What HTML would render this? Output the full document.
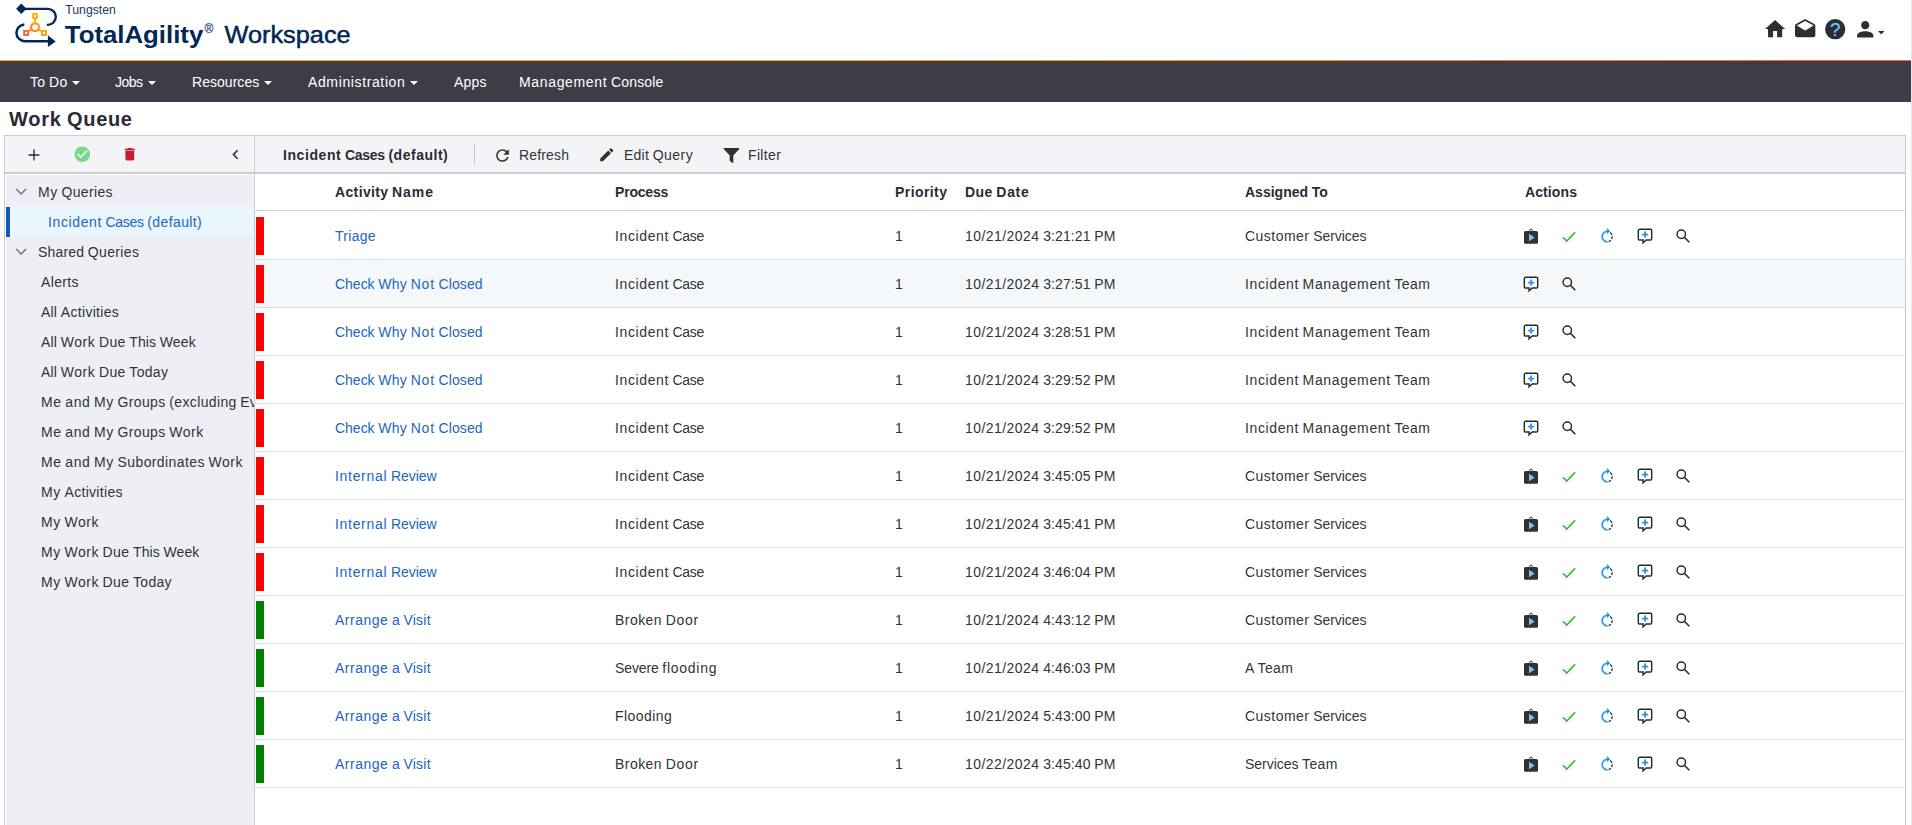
<!DOCTYPE html>
<html lang="en"><head><meta charset="utf-8"><title>Work Queue</title>
<style>
html,body{margin:0;padding:0;background:#fff;}
body{width:1912px;height:825px;overflow:hidden;position:relative;font-family:"Liberation Sans",sans-serif;font-size:14px;color:#333;}
.a{position:absolute;white-space:nowrap;}
.a svg{display:block;}
.t{position:absolute;white-space:nowrap;height:30px;line-height:30px;}
.nav{color:#fff;}
.lnk{color:#2465bd;}
.b{font-weight:700;color:#2b2b33;}
.hl{position:absolute;background:#ddd;height:1px;}
</style></head><body>

<div class="a" style="left:1911px;top:0;width:1px;height:825px;background:#e9e9e9"></div>
<svg class="a" style="left:0;top:0" width="360" height="60" viewBox="0 0 360 60">
<defs><linearGradient id="lg" gradientUnits="userSpaceOnUse" x1="23" y1="36" x2="47" y2="13"><stop offset="0" stop-color="#ff4c40"/><stop offset="0.14" stop-color="#ff6240"/><stop offset="0.45" stop-color="#ff9818"/><stop offset="0.7" stop-color="#ffb300"/><stop offset="1" stop-color="#ffc400"/></linearGradient></defs>
<path d="M21.3 3.6l5.2 5.2-5.2 5.2-5.2-5.2z" fill="#002854"/>
<path d="M24 8.85H47.8a8 8 0 0 1 0 16H46.9" fill="none" stroke="#002854" stroke-width="2.4"/>
<path d="M24.3 24.42a8.4 8.4 0 0 0 0.3 16.78H49" fill="none" stroke="#002854" stroke-width="2.5"/>
<path d="M47.9 35.2l7.8 6.2-7.8 5.6z" fill="#002854"/>
<path d="M35.05 19v4.5M31.7 29.2l-3 2M38.3 29.2l3 2" stroke="url(#lg)" stroke-width="1.7" fill="none"/>
<circle cx="35" cy="27.2" r="3.97" fill="none" stroke="url(#lg)" stroke-width="2.3"/>
<rect x="33.15" y="13.9" width="3.9" height="4.2" fill="none" stroke="url(#lg)" stroke-width="1.9"/>
<rect x="24.2" y="31" width="4" height="3.95" fill="none" stroke="url(#lg)" stroke-width="1.95"/>
<rect x="42.05" y="31" width="4" height="3.95" fill="none" stroke="url(#lg)" stroke-width="1.95"/>
<text x="65.3" y="14.4" font-family="Liberation Sans, sans-serif" font-size="12" fill="#17355f" textLength="50.5" lengthAdjust="spacingAndGlyphs">Tungsten</text>
<text x="64.8" y="42.5" font-family="Liberation Sans, sans-serif" font-size="24.6" font-weight="700" fill="#002854" textLength="138.5" lengthAdjust="spacingAndGlyphs">TotalAgility</text>
<text x="204.4" y="33" font-family="Liberation Sans, sans-serif" font-size="12" fill="#3a5078" stroke="#3a5078" stroke-width="0.25">®</text>
<text x="224.6" y="42.5" font-family="Liberation Sans, sans-serif" font-size="24.6" fill="#002854" stroke="#002854" stroke-width="0.5" textLength="126" lengthAdjust="spacingAndGlyphs">Workspace</text>
</svg>
<div class="a" style="left:1763.2px;top:16.6px;"><svg width="24.2" height="24.2" viewBox="0 0 24 24" ><path fill="#2d2d38" d="M10 20v-6h4v6h5v-8h3L12 3 2 12h3v8z"/></svg></div>
<div class="a" style="left:1792.7px;top:17.7px;"><svg width="24.4" height="23.1" viewBox="0 0 24 24" preserveAspectRatio="none"><path fill="#2d2d38" d="M21.99 8c0-.72-.37-1.35-.94-1.7L12 1 2.95 6.3C2.38 6.65 2 7.28 2 8v10c0 1.1.9 2 2 2h16c1.1 0 2-.9 2-2l-.01-10zM12 13L3.74 7.84 12 3l8.26 4.84L12 13z"/></svg></div>
<div class="a" style="left:1822.7px;top:16.6px;"><svg width="24.4" height="24.4" viewBox="0 0 24 24"><circle cx="12" cy="12" r="10" fill="#2d2d38"/><text x="12" y="18.6" text-anchor="middle" font-family="Liberation Sans, sans-serif" font-size="18.5" fill="#6fcaf9" stroke="#6fcaf9" stroke-width="0.2">?</text></svg></div>
<div class="a" style="left:1853.2px;top:16.9px;"><svg width="24.5" height="24.5" viewBox="0 0 24 24" ><path fill="#2d2d38" d="M12 12c2.21 0 4-1.79 4-4s-1.79-4-4-4-4 1.79-4 4 1.79 4 4 4zm0 2c-2.67 0-8 1.34-8 4v2h16v-2c0-2.66-5.33-4-8-4z"/></svg></div>
<div class="a" style="left:1877.8px;top:30.5px;"><svg width="6.4" height="3.6" viewBox="0 0 7 4"><path d="M0 0h7L3.5 4z" fill="#2d2d38"/></svg></div>
<div class="a" style="left:0;top:60px;width:1911px;height:1px;background:linear-gradient(90deg,#f5b700 0%,#f7a823 45%,#f4683a 100%)"></div>
<div class="a" style="left:0;top:61px;width:1911px;height:40.5px;background:#3d3d47"></div>
<div class="t nav" style="left:30px;top:67px"><span style="word-spacing:-0.250px"><span style="letter-spacing:0.242px">To</span> <span style="letter-spacing:0.398px">Do</span></span></div>
<div class="a" style="left:71.6px;top:80.6px;"><svg width="8" height="4" viewBox="0 0 8 4"><path d="M0 0h8L4 4z" fill="#fff"/></svg></div>
<div class="t nav" style="left:115px;top:67px"><span style="word-spacing:-0.250px"><span style="letter-spacing:-0.492px">Jobs</span></span></div>
<div class="a" style="left:147.6px;top:80.6px;"><svg width="8" height="4" viewBox="0 0 8 4"><path d="M0 0h8L4 4z" fill="#fff"/></svg></div>
<div class="t nav" style="left:192px;top:67px"><span style="word-spacing:-0.250px"><span style="letter-spacing:0.038px">Resources</span></span></div>
<div class="a" style="left:263.6px;top:80.6px;"><svg width="8" height="4" viewBox="0 0 8 4"><path d="M0 0h8L4 4z" fill="#fff"/></svg></div>
<div class="t nav" style="left:308px;top:67px"><span style="word-spacing:-0.250px"><span style="letter-spacing:0.624px">Administration</span></span></div>
<div class="a" style="left:409.6px;top:80.6px;"><svg width="8" height="4" viewBox="0 0 8 4"><path d="M0 0h8L4 4z" fill="#fff"/></svg></div>
<div class="t nav" style="left:454px;top:67px"><span style="word-spacing:-0.250px"><span style="letter-spacing:0.238px">Apps</span></span></div>
<div class="t nav" style="left:519px;top:67px"><span style="word-spacing:-0.250px"><span style="letter-spacing:0.655px">Management</span> <span style="letter-spacing:0.183px">Console</span></span></div>
<div class="t" style="left:9px;top:104px;font-size:20px;font-weight:700;color:#2a2a34"><span style="word-spacing:-0.359px"><span style="letter-spacing:0.785px">Work</span> <span style="letter-spacing:0.691px">Queue</span></span></div>
<div class="a" style="left:4px;top:135px;width:1902px;height:700px;box-sizing:border-box;border:1px solid #cdcdcd;background:#fff"></div>
<div class="a" style="left:5px;top:136px;width:1900px;height:36px;background:#f4f4f8"></div>
<div class="a" style="left:5px;top:172px;width:1900px;height:2px;background:#cdcdcd"></div>
<div class="a" style="left:6px;top:175px;width:248px;height:660px;background:#eeeff5"></div>
<div class="a" style="left:254px;top:136px;width:1px;height:700px;background:#cdcdcd"></div>
<div class="a" style="left:474px;top:144px;width:1px;height:20px;background:#c4c4c8"></div>
<div class="a" style="left:28px;top:148.6px;"><svg width="12" height="12" viewBox="0 0 12 12"><path d="M0.6 6h10.8M6 0.6v10.8" stroke="#2d2d38" stroke-width="1.35" fill="none"/></svg></div>
<div class="a" style="left:72.6px;top:145.2px;"><svg width="18.6" height="18.6" viewBox="0 0 24 24" ><path fill="#78d88c" d="M12 2C6.48 2 2 6.48 2 12s4.48 10 10 10 10-4.48 10-10S17.52 2 12 2zm-2 15l-5-5 1.41-1.41L10 14.17l7.59-7.59L19 8l-9 9z"/></svg></div>
<div class="a" style="left:121px;top:145.6px;"><svg width="17.6" height="16.5" viewBox="0 0 24 24" preserveAspectRatio="none"><path fill="#c41e30" d="M6 19c0 1.1.9 2 2 2h8c1.1 0 2-.9 2-2V7H6v12zM19 4h-3.5l-1-1h-5l-1 1H5v2h14V4z"/></svg></div>
<div class="a" style="left:225.5px;top:145px;"><svg width="19" height="19" viewBox="0 0 24 24" ><path fill="#2d2d38" d="M15.41 7.41L14 6l-6 6 6 6 1.41-1.41L10.83 12z"/></svg></div>
<div class="t b" style="left:283px;top:140px"><span style="word-spacing:-0.250px"><span style="letter-spacing:0.584px">Incident</span> <span style="letter-spacing:-0.294px">Cases</span> <span style="letter-spacing:0.516px">(default)</span></span></div>
<div class="a" style="left:492.6px;top:145.6px;"><svg width="19" height="19" viewBox="0 0 24 24" ><path fill="#33322a" d="M17.65 6.35C16.2 4.9 14.21 4 12 4c-4.42 0-7.99 3.58-7.99 8s3.57 8 7.99 8c3.73 0 6.84-2.55 7.73-6h-2.08c-.82 2.33-3.04 4-5.65 4-3.31 0-6-2.69-6-6s2.69-6 6-6c1.66 0 3.14.69 4.22 1.78L13 11h7V4l-2.35 2.35z"/></svg></div>
<div class="t" style="left:519px;top:140px"><span style="word-spacing:-0.250px"><span style="letter-spacing:0.165px">Refresh</span></span></div>
<div class="a" style="left:597.6px;top:146px;"><svg width="17.5" height="17.5" viewBox="0 0 24 24" ><path fill="#33322a" d="M3 17.25V21h3.75L17.81 9.94l-3.75-3.75L3 17.25zM20.71 7.04c.39-.39.39-1.02 0-1.41l-2.34-2.34c-.39-.39-1.02-.39-1.41 0l-1.83 1.83 3.75 3.75 1.83-1.83z"/></svg></div>
<div class="t" style="left:624px;top:140px"><span style="word-spacing:-0.250px"><span style="letter-spacing:0.234px">Edit</span> <span style="letter-spacing:0.456px">Query</span></span></div>
<div class="a" style="left:722.5px;top:147px;"><svg width="17" height="17" viewBox="0 0 17 17"><path d="M1.2 1h14.6a.6.6 0 0 1 .45 1L10.3 8.6v6.9a.5.5 0 0 1-.8.4L6.9 14a.6.6 0 0 1-.2-.45V8.6L.75 2a.6.6 0 0 1 .45-1z" fill="#33322a"/></svg></div>
<div class="t" style="left:748px;top:140px"><span style="word-spacing:-0.250px"><span style="letter-spacing:0.352px">Filter</span></span></div>
<div class="a" style="left:6px;top:207px;width:248px;height:30px;background:#e9f6fe"></div>
<div class="a" style="left:6px;top:207px;width:4px;height:30px;background:#0e5bbe"></div>
<div class="a" style="left:15px;top:188.4px;"><svg width="12" height="8" viewBox="0 0 12 8"><path d="M1.2 1l4.9 5 4.9-5" fill="none" stroke="#70707a" stroke-width="1.4"/></svg></div>
<div class="a" style="left:15px;top:248.4px;"><svg width="12" height="8" viewBox="0 0 12 8"><path d="M1.2 1l4.9 5 4.9-5" fill="none" stroke="#70707a" stroke-width="1.4"/></svg></div>
<div class="t" style="left:38px;top:177px;max-width:216px;overflow:hidden"><span style="word-spacing:-0.250px"><span style="letter-spacing:0.586px">My</span> <span style="letter-spacing:0.350px">Queries</span></span></div>
<div class="t lnk" style="left:48px;top:207px;max-width:206px;overflow:hidden"><span style="word-spacing:-0.250px"><span style="letter-spacing:0.613px">Incident</span> <span style="letter-spacing:-0.334px">Cases</span> <span style="letter-spacing:0.394px">(default)</span></span></div>
<div class="t" style="left:38px;top:237px;max-width:216px;overflow:hidden"><span style="word-spacing:-0.250px"><span style="letter-spacing:0.174px">Shared</span> <span style="letter-spacing:0.350px">Queries</span></span></div>
<div class="t" style="left:41px;top:267px;max-width:213px;overflow:hidden"><span style="word-spacing:-0.250px"><span style="letter-spacing:0.367px">Alerts</span></span></div>
<div class="t" style="left:41px;top:297px;max-width:213px;overflow:hidden"><span style="word-spacing:-0.250px"><span style="letter-spacing:0.203px">All</span> <span style="letter-spacing:0.309px">Activities</span></span></div>
<div class="t" style="left:41px;top:327px;max-width:213px;overflow:hidden"><span style="word-spacing:-0.250px"><span style="letter-spacing:0.203px">All</span> <span style="letter-spacing:0.512px">Work</span> <span style="letter-spacing:0.365px">Due</span> <span style="letter-spacing:0.078px">This</span> <span style="letter-spacing:0.117px">Week</span></span></div>
<div class="t" style="left:41px;top:357px;max-width:213px;overflow:hidden"><span style="word-spacing:-0.250px"><span style="letter-spacing:0.203px">All</span> <span style="letter-spacing:0.512px">Work</span> <span style="letter-spacing:0.365px">Due</span> <span style="letter-spacing:0.306px">Today</span></span></div>
<div class="t" style="left:41px;top:387px;max-width:213px;overflow:hidden"><span style="word-spacing:-0.250px"><span style="letter-spacing:0.578px">Me</span> <span style="letter-spacing:0.589px">and</span> <span style="letter-spacing:0.586px">My</span> <span style="letter-spacing:0.370px">Groups</span> <span style="letter-spacing:0.359px">(excluding</span> <span style="letter-spacing:-0.009px">Events)</span></span></div>
<div class="t" style="left:41px;top:417px;max-width:213px;overflow:hidden"><span style="word-spacing:-0.250px"><span style="letter-spacing:0.578px">Me</span> <span style="letter-spacing:0.589px">and</span> <span style="letter-spacing:0.586px">My</span> <span style="letter-spacing:0.370px">Groups</span> <span style="letter-spacing:0.512px">Work</span></span></div>
<div class="t" style="left:41px;top:447px;max-width:213px;overflow:hidden"><span style="word-spacing:-0.250px"><span style="letter-spacing:0.578px">Me</span> <span style="letter-spacing:0.589px">and</span> <span style="letter-spacing:0.586px">My</span> <span style="letter-spacing:0.400px">Subordinates</span> <span style="letter-spacing:0.512px">Work</span></span></div>
<div class="t" style="left:41px;top:477px;max-width:213px;overflow:hidden"><span style="word-spacing:-0.250px"><span style="letter-spacing:0.586px">My</span> <span style="letter-spacing:0.309px">Activities</span></span></div>
<div class="t" style="left:41px;top:507px;max-width:213px;overflow:hidden"><span style="word-spacing:-0.250px"><span style="letter-spacing:0.586px">My</span> <span style="letter-spacing:0.512px">Work</span></span></div>
<div class="t" style="left:41px;top:537px;max-width:213px;overflow:hidden"><span style="word-spacing:-0.250px"><span style="letter-spacing:0.586px">My</span> <span style="letter-spacing:0.512px">Work</span> <span style="letter-spacing:0.365px">Due</span> <span style="letter-spacing:0.078px">This</span> <span style="letter-spacing:0.117px">Week</span></span></div>
<div class="t" style="left:41px;top:567px;max-width:213px;overflow:hidden"><span style="word-spacing:-0.250px"><span style="letter-spacing:0.586px">My</span> <span style="letter-spacing:0.512px">Work</span> <span style="letter-spacing:0.365px">Due</span> <span style="letter-spacing:0.306px">Today</span></span></div>
<div class="t b" style="left:335px;top:177px"><span style="word-spacing:-0.250px"><span style="letter-spacing:0.357px">Activity</span> <span style="letter-spacing:0.910px">Name</span></span></div>
<div class="t b" style="left:615px;top:177px"><span style="word-spacing:-0.250px"><span style="letter-spacing:-0.203px">Process</span></span></div>
<div class="t b" style="left:895px;top:177px"><span style="word-spacing:-0.250px"><span style="letter-spacing:0.424px">Priority</span></span></div>
<div class="t b" style="left:965px;top:177px"><span style="word-spacing:-0.250px"><span style="letter-spacing:0.422px">Due</span> <span style="letter-spacing:0.680px">Date</span></span></div>
<div class="t b" style="left:1245px;top:177px"><span style="word-spacing:-0.250px"><span style="letter-spacing:0.010px">Assigned</span> <span style="letter-spacing:-0.109px">To</span></span></div>
<div class="t b" style="left:1525px;top:177px"><span style="word-spacing:-0.250px"><span style="letter-spacing:0.103px">Actions</span></span></div>
<div class="hl" style="left:255px;top:210px;width:1650px;background:#d0d0d0"></div>
<div class="a" style="left:256px;top:217px;width:8px;height:38px;background:#fe0000"></div>
<div class="t lnk" style="left:335px;top:221px"><span style="word-spacing:-0.250px"><span style="letter-spacing:0.279px">Triage</span></span></div>
<div class="t" style="left:615px;top:221px"><span style="word-spacing:-0.250px"><span style="letter-spacing:0.613px">Incident</span> <span style="letter-spacing:-0.344px">Case</span></span></div>
<div class="t" style="left:895px;top:221px"><span style="word-spacing:-0.250px"><span style="letter-spacing:0.219px">1</span></span></div>
<div class="t" style="left:965px;top:221px"><span style="word-spacing:-0.250px"><span style="letter-spacing:0.441px">10/21/2024</span> <span style="letter-spacing:0.118px">3:21:21</span> <span style="letter-spacing:0.086px">PM</span></span></div>
<div class="t" style="left:1245px;top:221px"><span style="word-spacing:-0.250px"><span style="letter-spacing:0.477px">Customer</span> <span style="letter-spacing:-0.033px">Services</span></span></div>
<div class="a" style="left:1522px;top:226px;"><svg width="18" height="20" viewBox="0 0 18 20"><circle cx="9" cy="4.7" r="1.5" fill="none" stroke="#33322a" stroke-width="1"/><rect x="2" y="4.9" width="14" height="12.9" rx="1.6" fill="#33322a"/><path d="M7 7.8v7.4l5.8-3.7z" fill="#6ec3fb"/></svg></div>
<div class="a" style="left:1560px;top:226.8px;"><svg width="18" height="18" viewBox="0 0 18 18"><path d="M2.9 10.3l3.8 3.8L15.2 5.3" fill="none" stroke="#20bb38" stroke-width="1.5"/></svg></div>
<div class="a" style="left:1598px;top:226px;"><svg width="18" height="20" viewBox="0 0 18 20"><path d="M9.6 15.9A5.3 5.3 0 1 1 9.3 5.3" fill="none" stroke="#2196f3" stroke-width="1.6"/><path d="M8.9 1.9v6.4l3.4-3.2z" fill="#2196f3"/><path d="M12.2 6.6A5.3 5.3 0 0 1 10.6 15.7" fill="none" stroke="#2b2320" stroke-width="1.3" stroke-dasharray="2.7 1.5"/></svg></div>
<div class="a" style="left:1636px;top:227.4px;"><svg width="18" height="18" viewBox="0 0 18 18"><path d="M3.6 2.3h10.8a1.3 1.3 0 0 1 1.3 1.3v8.1a1.3 1.3 0 0 1 -1.3 1.3H10.2L7.1 15.9V13H3.6a1.3 1.3 0 0 1 -1.3 -1.3V3.6a1.3 1.3 0 0 1 1.3 -1.3z" fill="none" stroke="#2b2924" stroke-width="1.45" stroke-linejoin="miter"/><path d="M6.1 7.6h6M9.1 4.6v6" stroke="#2196f3" stroke-width="1.8" fill="none"/></svg></div>
<div class="a" style="left:1673.8px;top:227.4px;"><svg width="18" height="18" viewBox="0 0 18 18"><circle cx="7.3" cy="7.2" r="4.2" fill="none" stroke="#2b2924" stroke-width="1.45"/><path d="M10.4 10.3l4.9 4.9" stroke="#2b2924" stroke-width="1.6" fill="none"/></svg></div>
<div class="hl" style="left:255px;top:259px;width:1650px"></div>
<div class="a" style="left:255px;top:260px;width:1650px;height:47px;background:#f5f8fb"></div>
<div class="a" style="left:256px;top:265px;width:8px;height:38px;background:#fe0000"></div>
<div class="t lnk" style="left:335px;top:269px"><span style="word-spacing:-0.250px"><span style="letter-spacing:-0.019px">Check</span> <span style="letter-spacing:0.271px">Why</span> <span style="letter-spacing:0.792px">Not</span> <span style="letter-spacing:0.094px">Closed</span></span></div>
<div class="t" style="left:615px;top:269px"><span style="word-spacing:-0.250px"><span style="letter-spacing:0.613px">Incident</span> <span style="letter-spacing:-0.344px">Case</span></span></div>
<div class="t" style="left:895px;top:269px"><span style="word-spacing:-0.250px"><span style="letter-spacing:0.219px">1</span></span></div>
<div class="t" style="left:965px;top:269px"><span style="word-spacing:-0.250px"><span style="letter-spacing:0.441px">10/21/2024</span> <span style="letter-spacing:0.118px">3:27:51</span> <span style="letter-spacing:0.086px">PM</span></span></div>
<div class="t" style="left:1245px;top:269px"><span style="word-spacing:-0.250px"><span style="letter-spacing:0.613px">Incident</span> <span style="letter-spacing:0.655px">Management</span> <span style="letter-spacing:0.355px">Team</span></span></div>
<div class="a" style="left:1522px;top:275.4px;"><svg width="18" height="18" viewBox="0 0 18 18"><path d="M3.6 2.3h10.8a1.3 1.3 0 0 1 1.3 1.3v8.1a1.3 1.3 0 0 1 -1.3 1.3H10.2L7.1 15.9V13H3.6a1.3 1.3 0 0 1 -1.3 -1.3V3.6a1.3 1.3 0 0 1 1.3 -1.3z" fill="none" stroke="#2b2924" stroke-width="1.45" stroke-linejoin="miter"/><path d="M6.1 7.6h6M9.1 4.6v6" stroke="#2196f3" stroke-width="1.8" fill="none"/></svg></div>
<div class="a" style="left:1559.8px;top:275.4px;"><svg width="18" height="18" viewBox="0 0 18 18"><circle cx="7.3" cy="7.2" r="4.2" fill="none" stroke="#2b2924" stroke-width="1.45"/><path d="M10.4 10.3l4.9 4.9" stroke="#2b2924" stroke-width="1.6" fill="none"/></svg></div>
<div class="hl" style="left:255px;top:307px;width:1650px"></div>
<div class="a" style="left:256px;top:313px;width:8px;height:38px;background:#fe0000"></div>
<div class="t lnk" style="left:335px;top:317px"><span style="word-spacing:-0.250px"><span style="letter-spacing:-0.019px">Check</span> <span style="letter-spacing:0.271px">Why</span> <span style="letter-spacing:0.792px">Not</span> <span style="letter-spacing:0.094px">Closed</span></span></div>
<div class="t" style="left:615px;top:317px"><span style="word-spacing:-0.250px"><span style="letter-spacing:0.613px">Incident</span> <span style="letter-spacing:-0.344px">Case</span></span></div>
<div class="t" style="left:895px;top:317px"><span style="word-spacing:-0.250px"><span style="letter-spacing:0.219px">1</span></span></div>
<div class="t" style="left:965px;top:317px"><span style="word-spacing:-0.250px"><span style="letter-spacing:0.441px">10/21/2024</span> <span style="letter-spacing:0.118px">3:28:51</span> <span style="letter-spacing:0.086px">PM</span></span></div>
<div class="t" style="left:1245px;top:317px"><span style="word-spacing:-0.250px"><span style="letter-spacing:0.613px">Incident</span> <span style="letter-spacing:0.655px">Management</span> <span style="letter-spacing:0.355px">Team</span></span></div>
<div class="a" style="left:1522px;top:323.4px;"><svg width="18" height="18" viewBox="0 0 18 18"><path d="M3.6 2.3h10.8a1.3 1.3 0 0 1 1.3 1.3v8.1a1.3 1.3 0 0 1 -1.3 1.3H10.2L7.1 15.9V13H3.6a1.3 1.3 0 0 1 -1.3 -1.3V3.6a1.3 1.3 0 0 1 1.3 -1.3z" fill="none" stroke="#2b2924" stroke-width="1.45" stroke-linejoin="miter"/><path d="M6.1 7.6h6M9.1 4.6v6" stroke="#2196f3" stroke-width="1.8" fill="none"/></svg></div>
<div class="a" style="left:1559.8px;top:323.4px;"><svg width="18" height="18" viewBox="0 0 18 18"><circle cx="7.3" cy="7.2" r="4.2" fill="none" stroke="#2b2924" stroke-width="1.45"/><path d="M10.4 10.3l4.9 4.9" stroke="#2b2924" stroke-width="1.6" fill="none"/></svg></div>
<div class="hl" style="left:255px;top:355px;width:1650px"></div>
<div class="a" style="left:256px;top:361px;width:8px;height:38px;background:#fe0000"></div>
<div class="t lnk" style="left:335px;top:365px"><span style="word-spacing:-0.250px"><span style="letter-spacing:-0.019px">Check</span> <span style="letter-spacing:0.271px">Why</span> <span style="letter-spacing:0.792px">Not</span> <span style="letter-spacing:0.094px">Closed</span></span></div>
<div class="t" style="left:615px;top:365px"><span style="word-spacing:-0.250px"><span style="letter-spacing:0.613px">Incident</span> <span style="letter-spacing:-0.344px">Case</span></span></div>
<div class="t" style="left:895px;top:365px"><span style="word-spacing:-0.250px"><span style="letter-spacing:0.219px">1</span></span></div>
<div class="t" style="left:965px;top:365px"><span style="word-spacing:-0.250px"><span style="letter-spacing:0.441px">10/21/2024</span> <span style="letter-spacing:0.118px">3:29:52</span> <span style="letter-spacing:0.086px">PM</span></span></div>
<div class="t" style="left:1245px;top:365px"><span style="word-spacing:-0.250px"><span style="letter-spacing:0.613px">Incident</span> <span style="letter-spacing:0.655px">Management</span> <span style="letter-spacing:0.355px">Team</span></span></div>
<div class="a" style="left:1522px;top:371.4px;"><svg width="18" height="18" viewBox="0 0 18 18"><path d="M3.6 2.3h10.8a1.3 1.3 0 0 1 1.3 1.3v8.1a1.3 1.3 0 0 1 -1.3 1.3H10.2L7.1 15.9V13H3.6a1.3 1.3 0 0 1 -1.3 -1.3V3.6a1.3 1.3 0 0 1 1.3 -1.3z" fill="none" stroke="#2b2924" stroke-width="1.45" stroke-linejoin="miter"/><path d="M6.1 7.6h6M9.1 4.6v6" stroke="#2196f3" stroke-width="1.8" fill="none"/></svg></div>
<div class="a" style="left:1559.8px;top:371.4px;"><svg width="18" height="18" viewBox="0 0 18 18"><circle cx="7.3" cy="7.2" r="4.2" fill="none" stroke="#2b2924" stroke-width="1.45"/><path d="M10.4 10.3l4.9 4.9" stroke="#2b2924" stroke-width="1.6" fill="none"/></svg></div>
<div class="hl" style="left:255px;top:403px;width:1650px"></div>
<div class="a" style="left:256px;top:409px;width:8px;height:38px;background:#fe0000"></div>
<div class="t lnk" style="left:335px;top:413px"><span style="word-spacing:-0.250px"><span style="letter-spacing:-0.019px">Check</span> <span style="letter-spacing:0.271px">Why</span> <span style="letter-spacing:0.792px">Not</span> <span style="letter-spacing:0.094px">Closed</span></span></div>
<div class="t" style="left:615px;top:413px"><span style="word-spacing:-0.250px"><span style="letter-spacing:0.613px">Incident</span> <span style="letter-spacing:-0.344px">Case</span></span></div>
<div class="t" style="left:895px;top:413px"><span style="word-spacing:-0.250px"><span style="letter-spacing:0.219px">1</span></span></div>
<div class="t" style="left:965px;top:413px"><span style="word-spacing:-0.250px"><span style="letter-spacing:0.441px">10/21/2024</span> <span style="letter-spacing:0.118px">3:29:52</span> <span style="letter-spacing:0.086px">PM</span></span></div>
<div class="t" style="left:1245px;top:413px"><span style="word-spacing:-0.250px"><span style="letter-spacing:0.613px">Incident</span> <span style="letter-spacing:0.655px">Management</span> <span style="letter-spacing:0.355px">Team</span></span></div>
<div class="a" style="left:1522px;top:419.4px;"><svg width="18" height="18" viewBox="0 0 18 18"><path d="M3.6 2.3h10.8a1.3 1.3 0 0 1 1.3 1.3v8.1a1.3 1.3 0 0 1 -1.3 1.3H10.2L7.1 15.9V13H3.6a1.3 1.3 0 0 1 -1.3 -1.3V3.6a1.3 1.3 0 0 1 1.3 -1.3z" fill="none" stroke="#2b2924" stroke-width="1.45" stroke-linejoin="miter"/><path d="M6.1 7.6h6M9.1 4.6v6" stroke="#2196f3" stroke-width="1.8" fill="none"/></svg></div>
<div class="a" style="left:1559.8px;top:419.4px;"><svg width="18" height="18" viewBox="0 0 18 18"><circle cx="7.3" cy="7.2" r="4.2" fill="none" stroke="#2b2924" stroke-width="1.45"/><path d="M10.4 10.3l4.9 4.9" stroke="#2b2924" stroke-width="1.6" fill="none"/></svg></div>
<div class="hl" style="left:255px;top:451px;width:1650px"></div>
<div class="a" style="left:256px;top:457px;width:8px;height:38px;background:#fe0000"></div>
<div class="t lnk" style="left:335px;top:461px"><span style="word-spacing:-0.250px"><span style="letter-spacing:0.693px">Internal</span> <span style="letter-spacing:-0.039px">Review</span></span></div>
<div class="t" style="left:615px;top:461px"><span style="word-spacing:-0.250px"><span style="letter-spacing:0.613px">Incident</span> <span style="letter-spacing:-0.344px">Case</span></span></div>
<div class="t" style="left:895px;top:461px"><span style="word-spacing:-0.250px"><span style="letter-spacing:0.219px">1</span></span></div>
<div class="t" style="left:965px;top:461px"><span style="word-spacing:-0.250px"><span style="letter-spacing:0.441px">10/21/2024</span> <span style="letter-spacing:0.118px">3:45:05</span> <span style="letter-spacing:0.086px">PM</span></span></div>
<div class="t" style="left:1245px;top:461px"><span style="word-spacing:-0.250px"><span style="letter-spacing:0.477px">Customer</span> <span style="letter-spacing:-0.033px">Services</span></span></div>
<div class="a" style="left:1522px;top:466px;"><svg width="18" height="20" viewBox="0 0 18 20"><circle cx="9" cy="4.7" r="1.5" fill="none" stroke="#33322a" stroke-width="1"/><rect x="2" y="4.9" width="14" height="12.9" rx="1.6" fill="#33322a"/><path d="M7 7.8v7.4l5.8-3.7z" fill="#6ec3fb"/></svg></div>
<div class="a" style="left:1560px;top:466.8px;"><svg width="18" height="18" viewBox="0 0 18 18"><path d="M2.9 10.3l3.8 3.8L15.2 5.3" fill="none" stroke="#20bb38" stroke-width="1.5"/></svg></div>
<div class="a" style="left:1598px;top:466px;"><svg width="18" height="20" viewBox="0 0 18 20"><path d="M9.6 15.9A5.3 5.3 0 1 1 9.3 5.3" fill="none" stroke="#2196f3" stroke-width="1.6"/><path d="M8.9 1.9v6.4l3.4-3.2z" fill="#2196f3"/><path d="M12.2 6.6A5.3 5.3 0 0 1 10.6 15.7" fill="none" stroke="#2b2320" stroke-width="1.3" stroke-dasharray="2.7 1.5"/></svg></div>
<div class="a" style="left:1636px;top:467.4px;"><svg width="18" height="18" viewBox="0 0 18 18"><path d="M3.6 2.3h10.8a1.3 1.3 0 0 1 1.3 1.3v8.1a1.3 1.3 0 0 1 -1.3 1.3H10.2L7.1 15.9V13H3.6a1.3 1.3 0 0 1 -1.3 -1.3V3.6a1.3 1.3 0 0 1 1.3 -1.3z" fill="none" stroke="#2b2924" stroke-width="1.45" stroke-linejoin="miter"/><path d="M6.1 7.6h6M9.1 4.6v6" stroke="#2196f3" stroke-width="1.8" fill="none"/></svg></div>
<div class="a" style="left:1673.8px;top:467.4px;"><svg width="18" height="18" viewBox="0 0 18 18"><circle cx="7.3" cy="7.2" r="4.2" fill="none" stroke="#2b2924" stroke-width="1.45"/><path d="M10.4 10.3l4.9 4.9" stroke="#2b2924" stroke-width="1.6" fill="none"/></svg></div>
<div class="hl" style="left:255px;top:499px;width:1650px"></div>
<div class="a" style="left:256px;top:505px;width:8px;height:38px;background:#fe0000"></div>
<div class="t lnk" style="left:335px;top:509px"><span style="word-spacing:-0.250px"><span style="letter-spacing:0.693px">Internal</span> <span style="letter-spacing:-0.039px">Review</span></span></div>
<div class="t" style="left:615px;top:509px"><span style="word-spacing:-0.250px"><span style="letter-spacing:0.613px">Incident</span> <span style="letter-spacing:-0.344px">Case</span></span></div>
<div class="t" style="left:895px;top:509px"><span style="word-spacing:-0.250px"><span style="letter-spacing:0.219px">1</span></span></div>
<div class="t" style="left:965px;top:509px"><span style="word-spacing:-0.250px"><span style="letter-spacing:0.441px">10/21/2024</span> <span style="letter-spacing:0.118px">3:45:41</span> <span style="letter-spacing:0.086px">PM</span></span></div>
<div class="t" style="left:1245px;top:509px"><span style="word-spacing:-0.250px"><span style="letter-spacing:0.477px">Customer</span> <span style="letter-spacing:-0.033px">Services</span></span></div>
<div class="a" style="left:1522px;top:514px;"><svg width="18" height="20" viewBox="0 0 18 20"><circle cx="9" cy="4.7" r="1.5" fill="none" stroke="#33322a" stroke-width="1"/><rect x="2" y="4.9" width="14" height="12.9" rx="1.6" fill="#33322a"/><path d="M7 7.8v7.4l5.8-3.7z" fill="#6ec3fb"/></svg></div>
<div class="a" style="left:1560px;top:514.8px;"><svg width="18" height="18" viewBox="0 0 18 18"><path d="M2.9 10.3l3.8 3.8L15.2 5.3" fill="none" stroke="#20bb38" stroke-width="1.5"/></svg></div>
<div class="a" style="left:1598px;top:514px;"><svg width="18" height="20" viewBox="0 0 18 20"><path d="M9.6 15.9A5.3 5.3 0 1 1 9.3 5.3" fill="none" stroke="#2196f3" stroke-width="1.6"/><path d="M8.9 1.9v6.4l3.4-3.2z" fill="#2196f3"/><path d="M12.2 6.6A5.3 5.3 0 0 1 10.6 15.7" fill="none" stroke="#2b2320" stroke-width="1.3" stroke-dasharray="2.7 1.5"/></svg></div>
<div class="a" style="left:1636px;top:515.4px;"><svg width="18" height="18" viewBox="0 0 18 18"><path d="M3.6 2.3h10.8a1.3 1.3 0 0 1 1.3 1.3v8.1a1.3 1.3 0 0 1 -1.3 1.3H10.2L7.1 15.9V13H3.6a1.3 1.3 0 0 1 -1.3 -1.3V3.6a1.3 1.3 0 0 1 1.3 -1.3z" fill="none" stroke="#2b2924" stroke-width="1.45" stroke-linejoin="miter"/><path d="M6.1 7.6h6M9.1 4.6v6" stroke="#2196f3" stroke-width="1.8" fill="none"/></svg></div>
<div class="a" style="left:1673.8px;top:515.4px;"><svg width="18" height="18" viewBox="0 0 18 18"><circle cx="7.3" cy="7.2" r="4.2" fill="none" stroke="#2b2924" stroke-width="1.45"/><path d="M10.4 10.3l4.9 4.9" stroke="#2b2924" stroke-width="1.6" fill="none"/></svg></div>
<div class="hl" style="left:255px;top:547px;width:1650px"></div>
<div class="a" style="left:256px;top:553px;width:8px;height:38px;background:#fe0000"></div>
<div class="t lnk" style="left:335px;top:557px"><span style="word-spacing:-0.250px"><span style="letter-spacing:0.693px">Internal</span> <span style="letter-spacing:-0.039px">Review</span></span></div>
<div class="t" style="left:615px;top:557px"><span style="word-spacing:-0.250px"><span style="letter-spacing:0.613px">Incident</span> <span style="letter-spacing:-0.344px">Case</span></span></div>
<div class="t" style="left:895px;top:557px"><span style="word-spacing:-0.250px"><span style="letter-spacing:0.219px">1</span></span></div>
<div class="t" style="left:965px;top:557px"><span style="word-spacing:-0.250px"><span style="letter-spacing:0.441px">10/21/2024</span> <span style="letter-spacing:0.118px">3:46:04</span> <span style="letter-spacing:0.086px">PM</span></span></div>
<div class="t" style="left:1245px;top:557px"><span style="word-spacing:-0.250px"><span style="letter-spacing:0.477px">Customer</span> <span style="letter-spacing:-0.033px">Services</span></span></div>
<div class="a" style="left:1522px;top:562px;"><svg width="18" height="20" viewBox="0 0 18 20"><circle cx="9" cy="4.7" r="1.5" fill="none" stroke="#33322a" stroke-width="1"/><rect x="2" y="4.9" width="14" height="12.9" rx="1.6" fill="#33322a"/><path d="M7 7.8v7.4l5.8-3.7z" fill="#6ec3fb"/></svg></div>
<div class="a" style="left:1560px;top:562.8px;"><svg width="18" height="18" viewBox="0 0 18 18"><path d="M2.9 10.3l3.8 3.8L15.2 5.3" fill="none" stroke="#20bb38" stroke-width="1.5"/></svg></div>
<div class="a" style="left:1598px;top:562px;"><svg width="18" height="20" viewBox="0 0 18 20"><path d="M9.6 15.9A5.3 5.3 0 1 1 9.3 5.3" fill="none" stroke="#2196f3" stroke-width="1.6"/><path d="M8.9 1.9v6.4l3.4-3.2z" fill="#2196f3"/><path d="M12.2 6.6A5.3 5.3 0 0 1 10.6 15.7" fill="none" stroke="#2b2320" stroke-width="1.3" stroke-dasharray="2.7 1.5"/></svg></div>
<div class="a" style="left:1636px;top:563.4px;"><svg width="18" height="18" viewBox="0 0 18 18"><path d="M3.6 2.3h10.8a1.3 1.3 0 0 1 1.3 1.3v8.1a1.3 1.3 0 0 1 -1.3 1.3H10.2L7.1 15.9V13H3.6a1.3 1.3 0 0 1 -1.3 -1.3V3.6a1.3 1.3 0 0 1 1.3 -1.3z" fill="none" stroke="#2b2924" stroke-width="1.45" stroke-linejoin="miter"/><path d="M6.1 7.6h6M9.1 4.6v6" stroke="#2196f3" stroke-width="1.8" fill="none"/></svg></div>
<div class="a" style="left:1673.8px;top:563.4px;"><svg width="18" height="18" viewBox="0 0 18 18"><circle cx="7.3" cy="7.2" r="4.2" fill="none" stroke="#2b2924" stroke-width="1.45"/><path d="M10.4 10.3l4.9 4.9" stroke="#2b2924" stroke-width="1.6" fill="none"/></svg></div>
<div class="hl" style="left:255px;top:595px;width:1650px"></div>
<div class="a" style="left:256px;top:601px;width:8px;height:38px;background:#008000"></div>
<div class="t lnk" style="left:335px;top:605px"><span style="word-spacing:-0.250px"><span style="letter-spacing:0.491px">Arrange</span> <span style="letter-spacing:0.062px">a</span> <span style="letter-spacing:0.237px">Visit</span></span></div>
<div class="t" style="left:615px;top:605px"><span style="word-spacing:-0.250px"><span style="letter-spacing:0.458px">Broken</span> <span style="letter-spacing:0.648px">Door</span></span></div>
<div class="t" style="left:895px;top:605px"><span style="word-spacing:-0.250px"><span style="letter-spacing:0.219px">1</span></span></div>
<div class="t" style="left:965px;top:605px"><span style="word-spacing:-0.250px"><span style="letter-spacing:0.441px">10/21/2024</span> <span style="letter-spacing:0.118px">4:43:12</span> <span style="letter-spacing:0.086px">PM</span></span></div>
<div class="t" style="left:1245px;top:605px"><span style="word-spacing:-0.250px"><span style="letter-spacing:0.477px">Customer</span> <span style="letter-spacing:-0.033px">Services</span></span></div>
<div class="a" style="left:1522px;top:610px;"><svg width="18" height="20" viewBox="0 0 18 20"><circle cx="9" cy="4.7" r="1.5" fill="none" stroke="#33322a" stroke-width="1"/><rect x="2" y="4.9" width="14" height="12.9" rx="1.6" fill="#33322a"/><path d="M7 7.8v7.4l5.8-3.7z" fill="#6ec3fb"/></svg></div>
<div class="a" style="left:1560px;top:610.8px;"><svg width="18" height="18" viewBox="0 0 18 18"><path d="M2.9 10.3l3.8 3.8L15.2 5.3" fill="none" stroke="#20bb38" stroke-width="1.5"/></svg></div>
<div class="a" style="left:1598px;top:610px;"><svg width="18" height="20" viewBox="0 0 18 20"><path d="M9.6 15.9A5.3 5.3 0 1 1 9.3 5.3" fill="none" stroke="#2196f3" stroke-width="1.6"/><path d="M8.9 1.9v6.4l3.4-3.2z" fill="#2196f3"/><path d="M12.2 6.6A5.3 5.3 0 0 1 10.6 15.7" fill="none" stroke="#2b2320" stroke-width="1.3" stroke-dasharray="2.7 1.5"/></svg></div>
<div class="a" style="left:1636px;top:611.4px;"><svg width="18" height="18" viewBox="0 0 18 18"><path d="M3.6 2.3h10.8a1.3 1.3 0 0 1 1.3 1.3v8.1a1.3 1.3 0 0 1 -1.3 1.3H10.2L7.1 15.9V13H3.6a1.3 1.3 0 0 1 -1.3 -1.3V3.6a1.3 1.3 0 0 1 1.3 -1.3z" fill="none" stroke="#2b2924" stroke-width="1.45" stroke-linejoin="miter"/><path d="M6.1 7.6h6M9.1 4.6v6" stroke="#2196f3" stroke-width="1.8" fill="none"/></svg></div>
<div class="a" style="left:1673.8px;top:611.4px;"><svg width="18" height="18" viewBox="0 0 18 18"><circle cx="7.3" cy="7.2" r="4.2" fill="none" stroke="#2b2924" stroke-width="1.45"/><path d="M10.4 10.3l4.9 4.9" stroke="#2b2924" stroke-width="1.6" fill="none"/></svg></div>
<div class="hl" style="left:255px;top:643px;width:1650px"></div>
<div class="a" style="left:256px;top:649px;width:8px;height:38px;background:#008000"></div>
<div class="t lnk" style="left:335px;top:653px"><span style="word-spacing:-0.250px"><span style="letter-spacing:0.491px">Arrange</span> <span style="letter-spacing:0.062px">a</span> <span style="letter-spacing:0.237px">Visit</span></span></div>
<div class="t" style="left:615px;top:653px"><span style="word-spacing:-0.250px"><span style="letter-spacing:-0.107px">Severe</span> <span style="letter-spacing:0.727px">flooding</span></span></div>
<div class="t" style="left:895px;top:653px"><span style="word-spacing:-0.250px"><span style="letter-spacing:0.219px">1</span></span></div>
<div class="t" style="left:965px;top:653px"><span style="word-spacing:-0.250px"><span style="letter-spacing:0.441px">10/21/2024</span> <span style="letter-spacing:0.118px">4:46:03</span> <span style="letter-spacing:0.086px">PM</span></span></div>
<div class="t" style="left:1245px;top:653px"><span style="word-spacing:-0.250px"><span style="letter-spacing:-0.391px">A</span> <span style="letter-spacing:0.355px">Team</span></span></div>
<div class="a" style="left:1522px;top:658px;"><svg width="18" height="20" viewBox="0 0 18 20"><circle cx="9" cy="4.7" r="1.5" fill="none" stroke="#33322a" stroke-width="1"/><rect x="2" y="4.9" width="14" height="12.9" rx="1.6" fill="#33322a"/><path d="M7 7.8v7.4l5.8-3.7z" fill="#6ec3fb"/></svg></div>
<div class="a" style="left:1560px;top:658.8px;"><svg width="18" height="18" viewBox="0 0 18 18"><path d="M2.9 10.3l3.8 3.8L15.2 5.3" fill="none" stroke="#20bb38" stroke-width="1.5"/></svg></div>
<div class="a" style="left:1598px;top:658px;"><svg width="18" height="20" viewBox="0 0 18 20"><path d="M9.6 15.9A5.3 5.3 0 1 1 9.3 5.3" fill="none" stroke="#2196f3" stroke-width="1.6"/><path d="M8.9 1.9v6.4l3.4-3.2z" fill="#2196f3"/><path d="M12.2 6.6A5.3 5.3 0 0 1 10.6 15.7" fill="none" stroke="#2b2320" stroke-width="1.3" stroke-dasharray="2.7 1.5"/></svg></div>
<div class="a" style="left:1636px;top:659.4px;"><svg width="18" height="18" viewBox="0 0 18 18"><path d="M3.6 2.3h10.8a1.3 1.3 0 0 1 1.3 1.3v8.1a1.3 1.3 0 0 1 -1.3 1.3H10.2L7.1 15.9V13H3.6a1.3 1.3 0 0 1 -1.3 -1.3V3.6a1.3 1.3 0 0 1 1.3 -1.3z" fill="none" stroke="#2b2924" stroke-width="1.45" stroke-linejoin="miter"/><path d="M6.1 7.6h6M9.1 4.6v6" stroke="#2196f3" stroke-width="1.8" fill="none"/></svg></div>
<div class="a" style="left:1673.8px;top:659.4px;"><svg width="18" height="18" viewBox="0 0 18 18"><circle cx="7.3" cy="7.2" r="4.2" fill="none" stroke="#2b2924" stroke-width="1.45"/><path d="M10.4 10.3l4.9 4.9" stroke="#2b2924" stroke-width="1.6" fill="none"/></svg></div>
<div class="hl" style="left:255px;top:691px;width:1650px"></div>
<div class="a" style="left:256px;top:697px;width:8px;height:38px;background:#008000"></div>
<div class="t lnk" style="left:335px;top:701px"><span style="word-spacing:-0.250px"><span style="letter-spacing:0.491px">Arrange</span> <span style="letter-spacing:0.062px">a</span> <span style="letter-spacing:0.237px">Visit</span></span></div>
<div class="t" style="left:615px;top:701px"><span style="word-spacing:-0.250px"><span style="letter-spacing:0.451px">Flooding</span></span></div>
<div class="t" style="left:895px;top:701px"><span style="word-spacing:-0.250px"><span style="letter-spacing:0.219px">1</span></span></div>
<div class="t" style="left:965px;top:701px"><span style="word-spacing:-0.250px"><span style="letter-spacing:0.441px">10/21/2024</span> <span style="letter-spacing:0.118px">5:43:00</span> <span style="letter-spacing:0.086px">PM</span></span></div>
<div class="t" style="left:1245px;top:701px"><span style="word-spacing:-0.250px"><span style="letter-spacing:0.477px">Customer</span> <span style="letter-spacing:-0.033px">Services</span></span></div>
<div class="a" style="left:1522px;top:706px;"><svg width="18" height="20" viewBox="0 0 18 20"><circle cx="9" cy="4.7" r="1.5" fill="none" stroke="#33322a" stroke-width="1"/><rect x="2" y="4.9" width="14" height="12.9" rx="1.6" fill="#33322a"/><path d="M7 7.8v7.4l5.8-3.7z" fill="#6ec3fb"/></svg></div>
<div class="a" style="left:1560px;top:706.8px;"><svg width="18" height="18" viewBox="0 0 18 18"><path d="M2.9 10.3l3.8 3.8L15.2 5.3" fill="none" stroke="#20bb38" stroke-width="1.5"/></svg></div>
<div class="a" style="left:1598px;top:706px;"><svg width="18" height="20" viewBox="0 0 18 20"><path d="M9.6 15.9A5.3 5.3 0 1 1 9.3 5.3" fill="none" stroke="#2196f3" stroke-width="1.6"/><path d="M8.9 1.9v6.4l3.4-3.2z" fill="#2196f3"/><path d="M12.2 6.6A5.3 5.3 0 0 1 10.6 15.7" fill="none" stroke="#2b2320" stroke-width="1.3" stroke-dasharray="2.7 1.5"/></svg></div>
<div class="a" style="left:1636px;top:707.4px;"><svg width="18" height="18" viewBox="0 0 18 18"><path d="M3.6 2.3h10.8a1.3 1.3 0 0 1 1.3 1.3v8.1a1.3 1.3 0 0 1 -1.3 1.3H10.2L7.1 15.9V13H3.6a1.3 1.3 0 0 1 -1.3 -1.3V3.6a1.3 1.3 0 0 1 1.3 -1.3z" fill="none" stroke="#2b2924" stroke-width="1.45" stroke-linejoin="miter"/><path d="M6.1 7.6h6M9.1 4.6v6" stroke="#2196f3" stroke-width="1.8" fill="none"/></svg></div>
<div class="a" style="left:1673.8px;top:707.4px;"><svg width="18" height="18" viewBox="0 0 18 18"><circle cx="7.3" cy="7.2" r="4.2" fill="none" stroke="#2b2924" stroke-width="1.45"/><path d="M10.4 10.3l4.9 4.9" stroke="#2b2924" stroke-width="1.6" fill="none"/></svg></div>
<div class="hl" style="left:255px;top:739px;width:1650px"></div>
<div class="a" style="left:256px;top:745px;width:8px;height:38px;background:#008000"></div>
<div class="t lnk" style="left:335px;top:749px"><span style="word-spacing:-0.250px"><span style="letter-spacing:0.491px">Arrange</span> <span style="letter-spacing:0.062px">a</span> <span style="letter-spacing:0.237px">Visit</span></span></div>
<div class="t" style="left:615px;top:749px"><span style="word-spacing:-0.250px"><span style="letter-spacing:0.458px">Broken</span> <span style="letter-spacing:0.648px">Door</span></span></div>
<div class="t" style="left:895px;top:749px"><span style="word-spacing:-0.250px"><span style="letter-spacing:0.219px">1</span></span></div>
<div class="t" style="left:965px;top:749px"><span style="word-spacing:-0.250px"><span style="letter-spacing:0.441px">10/22/2024</span> <span style="letter-spacing:0.118px">3:45:40</span> <span style="letter-spacing:0.086px">PM</span></span></div>
<div class="t" style="left:1245px;top:749px"><span style="word-spacing:-0.250px"><span style="letter-spacing:-0.033px">Services</span> <span style="letter-spacing:0.355px">Team</span></span></div>
<div class="a" style="left:1522px;top:754px;"><svg width="18" height="20" viewBox="0 0 18 20"><circle cx="9" cy="4.7" r="1.5" fill="none" stroke="#33322a" stroke-width="1"/><rect x="2" y="4.9" width="14" height="12.9" rx="1.6" fill="#33322a"/><path d="M7 7.8v7.4l5.8-3.7z" fill="#6ec3fb"/></svg></div>
<div class="a" style="left:1560px;top:754.8px;"><svg width="18" height="18" viewBox="0 0 18 18"><path d="M2.9 10.3l3.8 3.8L15.2 5.3" fill="none" stroke="#20bb38" stroke-width="1.5"/></svg></div>
<div class="a" style="left:1598px;top:754px;"><svg width="18" height="20" viewBox="0 0 18 20"><path d="M9.6 15.9A5.3 5.3 0 1 1 9.3 5.3" fill="none" stroke="#2196f3" stroke-width="1.6"/><path d="M8.9 1.9v6.4l3.4-3.2z" fill="#2196f3"/><path d="M12.2 6.6A5.3 5.3 0 0 1 10.6 15.7" fill="none" stroke="#2b2320" stroke-width="1.3" stroke-dasharray="2.7 1.5"/></svg></div>
<div class="a" style="left:1636px;top:755.4px;"><svg width="18" height="18" viewBox="0 0 18 18"><path d="M3.6 2.3h10.8a1.3 1.3 0 0 1 1.3 1.3v8.1a1.3 1.3 0 0 1 -1.3 1.3H10.2L7.1 15.9V13H3.6a1.3 1.3 0 0 1 -1.3 -1.3V3.6a1.3 1.3 0 0 1 1.3 -1.3z" fill="none" stroke="#2b2924" stroke-width="1.45" stroke-linejoin="miter"/><path d="M6.1 7.6h6M9.1 4.6v6" stroke="#2196f3" stroke-width="1.8" fill="none"/></svg></div>
<div class="a" style="left:1673.8px;top:755.4px;"><svg width="18" height="18" viewBox="0 0 18 18"><circle cx="7.3" cy="7.2" r="4.2" fill="none" stroke="#2b2924" stroke-width="1.45"/><path d="M10.4 10.3l4.9 4.9" stroke="#2b2924" stroke-width="1.6" fill="none"/></svg></div>
<div class="hl" style="left:255px;top:787px;width:1650px"></div>
</body></html>
